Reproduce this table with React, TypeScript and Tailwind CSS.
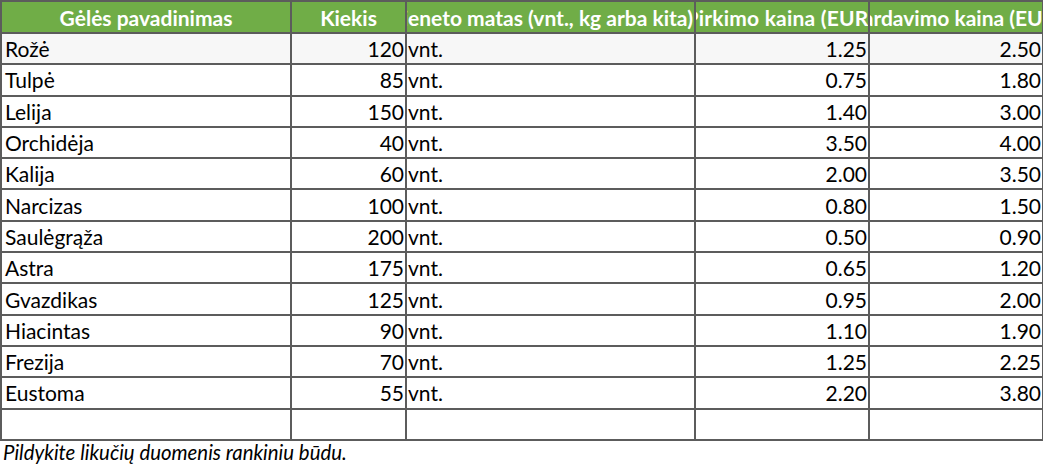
import React from 'react';

const rows: [string, number, string, string, string][] = [
  ['Rožė', 120, 'vnt.', '1.25', '2.50'],
  ['Tulpė', 85, 'vnt.', '0.75', '1.80'],
  ['Lelija', 150, 'vnt.', '1.40', '3.00'],
  ['Orchidėja', 40, 'vnt.', '3.50', '4.00'],
  ['Kalija', 60, 'vnt.', '2.00', '3.50'],
  ['Narcizas', 100, 'vnt.', '0.80', '1.50'],
  ['Saulėgrąža', 200, 'vnt.', '0.50', '0.90'],
  ['Astra', 175, 'vnt.', '0.65', '1.20'],
  ['Gvazdikas', 125, 'vnt.', '0.95', '2.00'],
  ['Hiacintas', 90, 'vnt.', '1.10', '1.90'],
  ['Frezija', 70, 'vnt.', '1.25', '2.25'],
  ['Eustoma', 55, 'vnt.', '2.20', '3.80'],
];

const headers = [
  { label: 'Gėlės pavadinimas', shift: '' },
  { label: 'Kiekis', shift: '' },
  { label: 'Vieneto matas (vnt., kg arba kita)', shift: 'pr-[20px]' },
  { label: 'Pirkimo kaina (EUR)', shift: 'pr-[4px] tracking-[0.2px]' },
  { label: 'Pardavimo kaina (EUR)', shift: '' },
];

const cell = 'border-2 border-[#5c5c5c] p-0 h-[31.3px] overflow-hidden whitespace-nowrap leading-none';

export default function App() {
  return (
    <div className="w-[1043px] h-[464px] bg-white overflow-hidden text-[21px] text-black" style={{ fontFamily: 'Lato, "Noto Sans", sans-serif' }}>
      <table className="table-fixed border-collapse w-[1042px]">
        <colgroup>
          <col className="w-[290px]" />
          <col className="w-[115px]" />
          <col className="w-[289px]" />
          <col className="w-[174px]" />
          <col className="w-[174px]" />
        </colgroup>
        <thead>
          <tr className="bg-[#70ad47] text-white font-bold">
            {headers.map((h) => (
              <th key={h.label} className="border-2 border-[#5c5c5c] p-0 h-[32px] overflow-hidden">
                <div className={`flex justify-center whitespace-nowrap leading-none ${h.shift}`}>{h.label}</div>
              </th>
            ))}
          </tr>
        </thead>
        <tbody>
          {rows.map((r, i) => (
            <tr key={r[0]} className={i === 0 ? 'bg-[#f7f7f7]' : 'bg-white'}>
              <td className={`${cell} pl-[3px] text-left`}>{r[0]}</td>
              <td className={`${cell} pr-[1px] text-right`}>{r[1]}</td>
              <td className={`${cell} pl-[1px] text-left`}>{r[2]}</td>
              <td className={`${cell} pr-[1px] text-right`}>{r[3]}</td>
              <td className={`${cell} pr-[1px] text-right`}>{r[4]}</td>
            </tr>
          ))}
          <tr>
            <td className={cell}></td>
            <td className={cell}></td>
            <td className={cell}></td>
            <td className={cell}></td>
            <td className={cell}></td>
          </tr>
        </tbody>
      </table>
      <p className="italic text-[20.4px] pl-[3px] leading-[22px]">Pildykite likučių duomenis rankiniu būdu.</p>
    </div>
  );
}
